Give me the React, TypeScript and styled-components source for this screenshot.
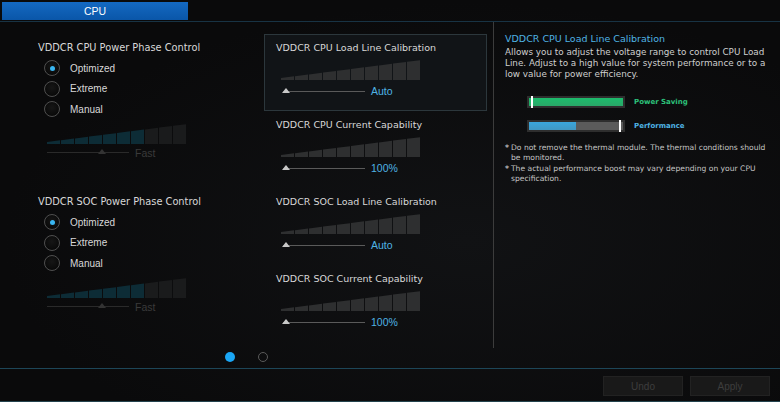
import * as React from 'react';
import styled, { createGlobalStyle } from 'styled-components';

const blue = '#4fb3e4';
const font = '"DejaVu Sans", Verdana, sans-serif';

const GlobalStyle = createGlobalStyle`
  html, body {
    margin: 0;
    padding: 0;
    background: #0a0a0b;
  }
  * {
    box-sizing: border-box;
  }
`;

const StyledRoot = styled.div`
  background: radial-gradient(ellipse at 60% 60%, #111214 0%, #0a0a0b 70%);
  color: #d8d8d8;
  display: flex;
  flex-direction: column;
  font-family: ${font};
  height: 402px;
  overflow: hidden;
  width: 780px;
`;

const TabBar = styled.div`
  border-bottom: 1px solid #183344;
  display: flex;
  height: 22px;
  padding: 2px 0 0 2px;
`;

const Tab = styled.div`
  align-items: center;
  background: linear-gradient(#1469c2, #0a56a8);
  color: #fff;
  display: flex;
  font-family: "Liberation Sans", Arial, sans-serif;
  font-size: 10.5px;
  height: 18px;
  justify-content: center;
  width: 186px;
`;

const Main = styled.div`
  align-items: flex-start;
  display: flex;
  height: 346px;
`;

const Content = styled.div`
  display: flex;
  flex-direction: column;
  width: 493px;
`;

const Columns = styled.div`
  display: flex;
  padding: 12px 0 0 38px;
`;

const LeftColumn = styled.div`
  display: flex;
  flex-direction: column;
  width: 226px;
`;

const MiddleColumn = styled.div`
  display: flex;
  flex-direction: column;
  width: 223px;
`;

const Group = styled.div`
  display: flex;
  flex-direction: column;
  height: 154px;
  padding-top: 8px;
`;

const Title = styled.div<{ $size?: number }>`
  font-size: ${(p) => p.$size ?? 9.5}px;
  line-height: 12px;
  white-space: nowrap;
`;

const RadioList = styled.div`
  display: flex;
  flex-direction: column;
  margin: 4px 0 0 6px;
`;

const RadioRow = styled.div`
  align-items: center;
  display: flex;
  font-family: "Liberation Sans", Arial, sans-serif;
  font-size: 10px;
  gap: 10px;
  height: 20.5px;
`;

const RadioCircle = styled.div<{ $checked?: boolean }>`
  align-items: center;
  background: radial-gradient(circle at 50% 40%, #161616, #050505);
  border: 1px solid #4f4f4f;
  border-radius: 50%;
  display: flex;
  height: 16px;
  justify-content: center;
  width: 16px;

  &::after {
    background: ${(p) => (p.$checked ? '#39b6f2' : 'transparent')};
    border-radius: 50%;
    content: '';
    height: 5px;
    width: 5px;
  }
`;

const Item = styled.div<{ $selected?: boolean }>`
  background: ${(p) => (p.$selected ? '#111417' : 'transparent')};
  border: 1px solid ${(p) => (p.$selected ? '#2c373c' : 'transparent')};
  display: flex;
  flex-direction: column;
  height: 77px;
  padding: 7px 0 0 11px;
`;

const BarsBox = styled.div<{ $indent: number; $gap: number }>`
  height: 20px;
  margin: ${(p) => p.$gap}px 0 0 ${(p) => p.$indent}px;
  width: 140px;
`;

const SliderRow = styled.div<{ $indent: number; $gap: number }>`
  align-items: center;
  display: flex;
  gap: 6px;
  height: 10px;
  margin: ${(p) => p.$gap}px 0 0 ${(p) => p.$indent}px;
`;

const Track = styled.div<{ $dim?: boolean }>`
  background: ${(p) => (p.$dim ? '#2a2a2a' : '#5a5a5a')};
  height: 1px;
  position: relative;
  width: 82px;
`;

const Thumb = styled.div<{ $dim?: boolean; $at: number }>`
  border-bottom: 5px solid ${(p) => (p.$dim ? '#333' : '#c8c8c8')};
  border-left: 4px solid transparent;
  border-right: 4px solid transparent;
  height: 0;
  left: ${(p) => p.$at}px;
  position: absolute;
  top: -3px;
  width: 0;
`;

const SliderValue = styled.span<{ $dim?: boolean }>`
  color: ${(p) => (p.$dim ? '#3a3a3a' : blue)};
  font-family: "Liberation Sans", Arial, sans-serif;
  font-size: 10.5px;
`;

const Pager = styled.div`
  display: flex;
  gap: 23px;
  padding: 10px 0 0 225px;
`;

const Dot = styled.div<{ $active?: boolean }>`
  background: ${(p) => (p.$active ? '#1aa6f5' : 'transparent')};
  border: ${(p) => (p.$active ? 'none' : '1.5px solid #5a5a5a')};
  border-radius: 50%;
  height: 10px;
  width: 10px;
`;

const InfoPanel = styled.div`
  border-left: 1px solid #3c3c3c;
  display: flex;
  flex-direction: column;
  height: 326px;
  padding: 11px 6px 0 11px;
  width: 287px;
`;

const InfoTitle = styled.div`
  color: ${blue};
  font-size: 9.5px;
  line-height: 12px;
`;

const InfoText = styled.div`
  color: #cfcfcf;
  font-size: 8.8px;
  line-height: 11px;
  margin-top: 2px;
`;

const Gauges = styled.div`
  display: flex;
  flex-direction: column;
  gap: 12px;
  margin: 16px 0 0 22px;
`;

const GaugeRow = styled.div`
  align-items: center;
  display: flex;
  gap: 9px;
`;

const GaugeFrame = styled.div`
  background: #5b5b5b;
  border: 2px solid #2e2e2e;
  display: flex;
  height: 12px;
  position: relative;
  width: 98px;
`;

const GaugeFill = styled.div<{ $color: string }>`
  background: linear-gradient(${(p) => p.$color}, ${(p) => p.$color}cc);
  height: 100%;
`;

const GaugeMarker = styled.div`
  background: #fff;
  height: 12px;
  position: absolute;
  top: -2px;
  width: 2px;
`;

const GaugeLabel = styled.span<{ $color: string }>`
  color: ${(p) => p.$color};
  font-size: 7px;
  font-weight: bold;
`;

const Notes = styled.div`
  display: flex;
  flex-direction: column;
  gap: 1px;
  margin-top: 11px;
`;

const Note = styled.div`
  color: #c4c4c4;
  display: flex;
  font-size: 7.6px;
  gap: 2px;
  line-height: 10px;
`;

const Star = styled.span`
  font-weight: bold;
`;

const Footer = styled.div`
  border-bottom: 1px solid #24434e;
  border-top: 1px solid #1d4658;
  display: flex;
  flex: 1;
  gap: 7px;
  justify-content: flex-end;
  padding: 7px 10px 0 0;
`;

const Button = styled.div`
  align-items: center;
  background: #191919;
  border: 1px solid #222;
  color: #3d3d3d;
  display: flex;
  font-family: "Liberation Sans", Arial, sans-serif;
  font-size: 10px;
  height: 20px;
  justify-content: center;
  width: 80px;
`;

const Bars = ({ dim = false, lit = 0 }: { dim?: boolean; lit?: number }) => {
  const segments = Array.from({ length: 10 }, (_, i) => {
    const x0 = i * 14;
    const x1 = x0 + 13;
    const top = (x: number) => 18 - (x / 140) * 18;
    const fill = dim ? (i < lit ? '#0d2c36' : '#1a1b1c') : '#2e2f30';
    return (
      <polygon
        key={i}
        points={`${x0},${top(x0)} ${x1},${top(x1)} ${x1},20 ${x0},20`}
        fill={fill}
      />
    );
  });
  return (
    <svg width="140" height="20" viewBox="0 0 140 20">
      {segments}
    </svg>
  );
};

const Slider = ({ dim = false, at, value, indent, gap }) => (
  <SliderRow $indent={indent} $gap={gap}>
    <Track $dim={dim}>
      <Thumb $dim={dim} $at={at} />
    </Track>
    <SliderValue $dim={dim}>{value}</SliderValue>
  </SliderRow>
);

const PhaseGroup = ({ title }) => (
  <Group>
    <Title $size={9.8}>{title}</Title>
    <RadioList>
      <RadioRow><RadioCircle $checked />Optimized</RadioRow>
      <RadioRow><RadioCircle />Extreme</RadioRow>
      <RadioRow><RadioCircle />Manual</RadioRow>
    </RadioList>
    <BarsBox $indent={9} $gap={4}>
      <Bars dim lit={7} />
    </BarsBox>
    <Slider dim at={51} value="Fast" indent={9} gap={4} />
  </Group>
);

const LevelItem = ({ title, value, selected = false }) => (
  <Item $selected={selected}>
    <Title>{title}</Title>
    <BarsBox $indent={5} $gap={6}>
      <Bars />
    </BarsBox>
    <Slider at={-1} value={value} indent={7} gap={6} />
  </Item>
);

const App = () => {
  return (
    <>
      <GlobalStyle />
      <StyledRoot>
        <TabBar>
          <Tab>CPU</Tab>
        </TabBar>
        <Main>
          <Content>
            <Columns>
              <LeftColumn>
                <PhaseGroup title="VDDCR CPU Power Phase Control" />
                <PhaseGroup title="VDDCR SOC Power Phase Control" />
              </LeftColumn>
              <MiddleColumn>
                <LevelItem selected title="VDDCR CPU Load Line Calibration" value="Auto" />
                <LevelItem title="VDDCR CPU Current Capability" value="100%" />
                <LevelItem title="VDDCR SOC Load Line Calibration" value="Auto" />
                <LevelItem title="VDDCR SOC Current Capability" value="100%" />
              </MiddleColumn>
            </Columns>
            <Pager>
              <Dot $active />
              <Dot />
            </Pager>
          </Content>
          <InfoPanel>
            <InfoTitle>VDDCR CPU Load Line Calibration</InfoTitle>
            <InfoText>
              Allows you to adjust the voltage range to control CPU Load Line. Adjust to a high
              value for system performance or to a low value for power efficiency.
            </InfoText>
            <Gauges>
              <GaugeRow>
                <GaugeFrame>
                  <GaugeFill $color="#1dbb6c" style={{ width: '100%' }} />
                  <GaugeMarker style={{ left: 2 }} />
                </GaugeFrame>
                <GaugeLabel $color="#2cc17a">Power Saving</GaugeLabel>
              </GaugeRow>
              <GaugeRow>
                <GaugeFrame>
                  <GaugeFill $color="#3aa6dc" style={{ width: '50%' }} />
                  <GaugeMarker style={{ left: 90 }} />
                </GaugeFrame>
                <GaugeLabel $color={blue}>Performance</GaugeLabel>
              </GaugeRow>
            </Gauges>
            <Notes>
              <Note>
                <Star>*</Star>
                <span>Do not remove the thermal module. The thermal conditions should be monitored.</span>
              </Note>
              <Note>
                <Star>*</Star>
                <span>The actual performance boost may vary depending on your CPU specification.</span>
              </Note>
            </Notes>
          </InfoPanel>
        </Main>
        <Footer>
          <Button>Undo</Button>
          <Button>Apply</Button>
        </Footer>
      </StyledRoot>
    </>
  );
};

export default App;
